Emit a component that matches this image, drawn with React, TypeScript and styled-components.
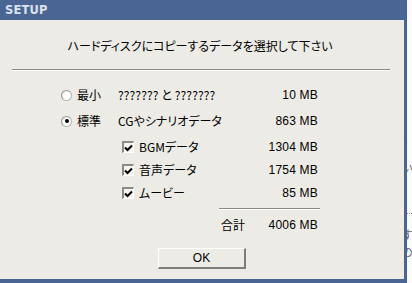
import React from 'react';
import styled, { createGlobalStyle } from 'styled-components';

const GlobalStyle = createGlobalStyle`
  html, body {
    margin: 0;
    padding: 0;
    width: 412px;
    height: 283px;
    overflow: hidden;
    background: #f7f7f7;
  }
`;

const FONT = `"Noto Sans CJK JP", "Liberation Sans", sans-serif`;
const BLUE = '#4a6592';

const Page = styled.div`
  display: flex;
  width: 412px;
  height: 283px;
  overflow: hidden;
`;

const Dialog = styled.div`
  width: 404px;
  height: 279px;
  display: flex;
  flex-direction: column;
  background: #ecebe5;
  border-right: 3px solid ${BLUE};
  border-bottom: 4px solid ${BLUE};
  font-family: ${FONT};
  font-size: 12px;
  color: #000;
  font-feature-settings: 'palt';
`;

const TitleBar = styled.div`
  height: 20px;
  background: ${BLUE};
  display: flex;
  align-items: center;
  padding-left: 5px;
  font-family: 'DejaVu Sans', sans-serif;
  font-weight: bold;
  font-size: 11.5px;
  color: #dbe2ee;
  letter-spacing: 0.2px;
`;

const Body = styled.div`
  display: flex;
  flex-direction: column;
  flex: 1;
`;

const Heading = styled.div`
  height: 18px;
  margin-top: 17px;
  line-height: 18px;
  text-align: center;
  padding-right: 4px;
`;

const Rule = styled.div`
  margin: 14px 14px 0 12px;
  height: 1px;
  background: #8a8a84;
  border-bottom: 1px solid #ffffff;
`;

const Options = styled.div`
  display: flex;
  flex-direction: column;
  width: 257px;
  margin-left: 61px;
  margin-top: 15px;
`;

const RadioRow = styled.div`
  display: grid;
  grid-template-columns: 16px 41px 1fr auto;
  align-items: center;
  height: 18px;
  line-height: 18px;
  margin-bottom: 8px;
`;

const Radio = styled.span<{ $checked?: boolean }>`
  box-sizing: border-box;
  width: 11px;
  height: 11px;
  border-radius: 50%;
  border: 1px solid #b8b8b2;
  border-top-color: #9a9a94;
  border-left-color: #9a9a94;
  background: radial-gradient(circle at 65% 65%, #ffffff 40%, #dcdcd6 100%);
  display: flex;
  align-items: center;
  justify-content: center;

  &::after {
    content: '';
    width: 4px;
    height: 4px;
    border-radius: 50%;
    background: ${(p) => (p.$checked ? '#000' : 'transparent')};
  }
`;

const CheckRow = styled.div`
  display: grid;
  grid-template-columns: 17px 1fr auto;
  align-items: center;
  height: 18px;
  line-height: 18px;
  margin-left: 61px;
  margin-bottom: 5px;
`;

const CheckBox = styled.span`
  box-sizing: border-box;
  width: 12px;
  height: 12px;
  border-top: 2px solid #8c8c86;
  border-left: 2px solid #8c8c86;
  border-right: 1px solid #ffffff;
  border-bottom: 1px solid #ffffff;
  background: #f4f4f0;
  display: flex;
  align-items: center;
  justify-content: center;
`;

const Size = styled.span`
  text-align: right;
  font-family: 'Liberation Sans', sans-serif;
  font-size: 12px;
  letter-spacing: 0.2px;
`;

const Muted = styled.span`
  font-size: 12px;
  letter-spacing: 0.1px;
`;

const TotalBlock = styled.div`
  margin-left: 158px;
  margin-top: 1px;
  display: flex;
  flex-direction: column;
`;

const TotalRule = styled.div`
  height: 1px;
  width: 101px;
  background: #8a8a84;
  border-bottom: 1px solid #ffffff;
`;

const TotalRow = styled.div`
  display: flex;
  justify-content: space-between;
  height: 18px;
  line-height: 18px;
  margin-top: 6px;
  padding-left: 2px;
`;

const ButtonRow = styled.div`
  display: flex;
  padding-left: 158px;
  margin-top: 14px;
`;

const Button = styled.button`
  box-sizing: border-box;
  width: 88px;
  height: 21px;
  padding: 0 0 1px;
  background: #ecebe5;
  border: none;
  border-top: 1px solid #ffffff;
  border-left: 1px solid #ffffff;
  border-right: 2px solid #7e7e78;
  border-bottom: 2px solid #7e7e78;
  font-family: 'Liberation Sans', sans-serif;
  font-size: 12px;
  color: #000;
`;

const BackWindow = styled.div`
  flex: 1;
  background: #fbfbfb;
  position: relative;
  overflow: hidden;
  font-family: ${FONT};
  font-size: 12px;
  line-height: 16px;
  color: #6a6a6a;
`;

const Fragment = styled.span<{ $top: number; $left: number }>`
  position: absolute;
  top: ${(p) => p.$top}px;
  left: ${(p) => p.$left}px;
  white-space: nowrap;
`;

const DottedLine = styled.div<{ $top: number }>`
  position: absolute;
  top: ${(p) => p.$top}px;
  left: 0;
  right: 0;
  border-top: 1px dotted #8a8a8a;
`;

function Check() {
  return (
    <svg width="9" height="8" viewBox="0 0 9 8">
      <path d="M1 3.5 L3.5 6 L8 1.5" stroke="#000" strokeWidth="2" fill="none" />
    </svg>
  );
}

const items = [
  { label: 'BGMデータ', size: '1304 MB' },
  { label: '音声データ', size: '1754 MB' },
  { label: 'ムービー', size: '85 MB' },
];

export default function App() {
  return (
    <Page>
      <GlobalStyle />
      <Dialog>
        <TitleBar>SETUP</TitleBar>
        <Body>
          <Heading>ハードディスクにコピーするデータを選択して下さい</Heading>
          <Rule />
          <Options>
            <RadioRow>
              <Radio />
              <span>最小</span>
              <Muted>??????? と ???????</Muted>
              <Size>10 MB</Size>
            </RadioRow>
            <RadioRow>
              <Radio $checked />
              <span>標準</span>
              <span>CGやシナリオデータ</span>
              <Size>863 MB</Size>
            </RadioRow>
            {items.map((it) => (
              <CheckRow key={it.label}>
                <CheckBox>
                  <Check />
                </CheckBox>
                <span>{it.label}</span>
                <Size>{it.size}</Size>
              </CheckRow>
            ))}
            <TotalBlock>
              <TotalRule />
              <TotalRow>
                <span>合計</span>
                <Size>4006 MB</Size>
              </TotalRow>
            </TotalBlock>
          </Options>
          <ButtonRow>
            <Button>OK</Button>
          </ButtonRow>
        </Body>
      </Dialog>
      <BackWindow>
        <Fragment $top={52} $left={-4}>l</Fragment>
        <Fragment $top={139} $left={-3}>ﾞ</Fragment>
        <Fragment $top={159} $left={-5}>ぃ</Fragment>
        <DottedLine $top={213} />
        <Fragment $top={227} $left={-6}>す</Fragment>
        <Fragment $top={244} $left={-6}>の</Fragment>
      </BackWindow>
    </Page>
  );
}
